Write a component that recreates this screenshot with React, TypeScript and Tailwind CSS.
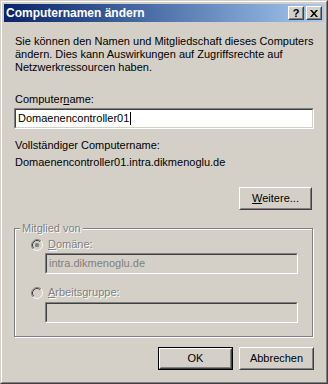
const font = "font-['Liberation_Sans',Arial,sans-serif]";

function Radio({ checked }: { checked?: boolean }) {
  return (
    <svg width="12" height="12" viewBox="0 0 12 12" className="shrink-0">
      <circle cx="6" cy="6" r="4.5" fill="#d4d0c8" />
      <path d="M1.76 10.24 A6 6 0 0 1 10.24 1.76" fill="none" stroke="#808080" strokeWidth="1" transform="translate(0.35 0.35) scale(0.94)" />
      <path d="M10.24 1.76 A6 6 0 0 1 1.76 10.24" fill="none" stroke="#ffffff" strokeWidth="1" transform="translate(0.35 0.35) scale(0.94)" />
      <path d="M2.82 9.18 A4.5 4.5 0 0 1 9.18 2.82" fill="none" stroke="#404040" strokeWidth="1" />
      <path d="M9.18 2.82 A4.5 4.5 0 0 1 2.82 9.18" fill="none" stroke="#d4d0c8" strokeWidth="1" />
      {checked && <rect x="4" y="4" width="4" height="4" rx="1.5" fill="#808080" />}
    </svg>
  );
}

function Button({ children, isDefault, className }: { children: React.ReactNode; isDefault?: boolean; className?: string }) {
  const inner = (
    <div className="h-full w-full border border-t-white border-l-white border-b-[#404040] border-r-[#404040]">
      <div className="flex h-full w-full items-center justify-center border border-t-[#d4d0c8] border-l-[#d4d0c8] border-b-[#808080] border-r-[#808080] text-[11px] leading-[13px] text-black">
        {children}
      </div>
    </div>
  );
  if (isDefault) {
    return <div className={`h-[23px] w-[75px] border border-black ${className ?? ""}`}>{inner}</div>;
  }
  return <div className={`h-[23px] w-[75px] ${className ?? ""}`}>{inner}</div>;
}

function Field({ value, disabled, caret, className }: { value?: string; disabled?: boolean; caret?: boolean; className?: string }) {
  return (
    <div className={`h-[21px] border border-t-[#808080] border-l-[#808080] border-b-white border-r-white ${className ?? ""}`}>
      <div
        className={`flex h-full items-center border border-t-[#404040] border-l-[#404040] border-b-[#d4d0c8] border-r-[#d4d0c8] pl-[2px] text-[11px] ${
          disabled ? "bg-[#d4d0c8] text-[#808080]" : "bg-white text-black"
        }`}
      >
        <span>{value}</span>
        {caret && <span className="ml-[1px] h-[13px] w-px bg-black" />}
      </div>
    </div>
  );
}

const dis = "text-[#808080] [text-shadow:1px_1px_0_#ffffff]";

export default function App() {
  return (
    <div className={`h-[384px] w-[328px] ${font} select-none`}>
      <div className="h-full w-full border border-t-[#d4d0c8] border-l-[#d4d0c8] border-b-[#404040] border-r-[#404040] bg-[#d4d0c8]">
        <div className="flex h-full w-full flex-col border border-t-white border-l-white border-b-[#808080] border-r-[#808080] p-[2px]">
          {/* title bar */}
          <div className="flex h-[18px] shrink-0 items-center bg-gradient-to-r from-[#0a246a] to-[#a6caf0] pl-[2px] pr-[2px]">
            <span className="text-[12px] font-bold leading-[14px] text-white">Computernamen ändern</span>
            <div className="ml-auto flex gap-[2px]">
              <div className="h-[14px] w-[16px] border border-t-white border-l-white border-b-[#404040] border-r-[#404040] bg-[#d4d0c8]">
                <div className="flex h-full w-full items-center justify-center border border-t-[#d4d0c8] border-l-[#d4d0c8] border-b-[#808080] border-r-[#808080] text-[11px] font-bold leading-none text-black">
                  ?
                </div>
              </div>
              <div className="h-[14px] w-[16px] border border-t-white border-l-white border-b-[#404040] border-r-[#404040] bg-[#d4d0c8]">
                <div className="flex h-full w-full items-center justify-center border border-t-[#d4d0c8] border-l-[#d4d0c8] border-b-[#808080] border-r-[#808080]">
                  <svg width="8" height="7" viewBox="0 0 8 7">
                    <path d="M0 0h2l2 2.5L6 0h2L5 3.5 8 7H6L4 4.5 2 7H0l3-3.5z" fill="#000" />
                  </svg>
                </div>
              </div>
            </div>
          </div>

          {/* client area */}
          <div className="flex flex-1 flex-col px-[10px] pt-[13px] text-[11px] leading-[13px] text-black">
            <p className="pl-px">
              Sie können den Namen und Mitgliedschaft dieses Computers
              <br />
              ändern. Dies kann Auswirkungen auf Zugriffsrechte auf
              <br />
              Netzwerkressourcen haben.
            </p>

            <p className="mt-[19px] pl-px">
              Computer<u>n</u>ame:
            </p>
            <Field value="Domaenencontroller01" caret className="mt-[2px] w-[300px]" />

            <p className="mt-[10px] pl-px">Vollständiger Computername:</p>
            <p className="mt-[4px] pl-px">Domaenencontroller01.intra.dikmenoglu.de</p>

            <Button className="ml-[225px] mt-[18px] !w-[73px]">
              <span>
                <u>W</u>eitere...
              </span>
            </Button>

            {/* group box */}
            <div className="relative mt-[18px] h-[109px] w-[299px] border border-[#808080] shadow-[inset_1px_1px_0_#ffffff,1px_1px_0_#ffffff]">
              <span className={`absolute -top-[7px] left-[5px] bg-[#d4d0c8] px-[2px] ${dis}`}>Mitglied von</span>
              <div className="flex flex-col pl-[16px] pt-[9px]">
                <div className="flex h-[13px] items-center gap-[5px]">
                  <Radio checked />
                  <span className={dis}>
                    <u>D</u>omäne:
                  </span>
                </div>
                <Field value="intra.dikmenoglu.de" disabled className="ml-[14px] mt-[2px] w-[253px]" />
                <div className="mt-[12px] flex h-[13px] items-center gap-[5px]">
                  <Radio />
                  <span className={dis}>
                    <u>A</u>rbeitsgruppe:
                  </span>
                </div>
                <Field disabled className="ml-[14px] mt-[3px] w-[253px]" />
              </div>
            </div>

            <div className="mt-[10px] flex justify-end gap-[6px]">
              <Button isDefault>OK</Button>
              <Button>Abbrechen</Button>
            </div>
          </div>
        </div>
      </div>
    </div>
  );
}
